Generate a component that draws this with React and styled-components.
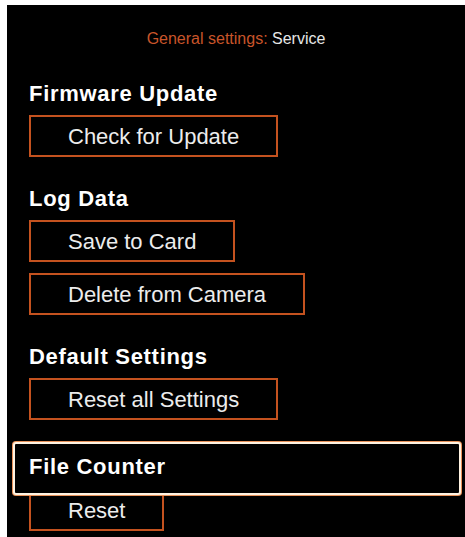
import React from "react";
import styled, { createGlobalStyle } from "styled-components";

const Global = createGlobalStyle`
  html, body { margin: 0; padding: 0; background: #ffffff; }
  body { font-family: "Liberation Sans", Arial, sans-serif; }
`;

const Page = styled.div`
  margin: 5px 0 0 7px;
  min-height: 532px;
  background: #000;
  color: #f2f2f2;
  font-family: "Liberation Sans", Arial, sans-serif;
  display: flex;
  flex-direction: column;
  overflow: hidden;
`;

const Header = styled.div`
  padding-top: 24px;
  font-size: 16px;
  line-height: 20px;
  text-align: center;
  color: #e6e6e6;
`;

const Crumb = styled.span`
  color: #c9552a;
`;

const Section = styled.section`
  display: flex;
  flex-direction: column;
  align-items: flex-start;
  padding-left: 22px;
  margin-top: ${(p) => p.$top}px;
`;

const Title = styled.h2`
  margin: 0;
  font-size: 22px;
  line-height: 26px;
  font-weight: 700;
  letter-spacing: 0.7px;
  color: #ffffff;
`;

const HighlightRow = styled.div`
  position: relative;
  z-index: 1;
  align-self: stretch;
  margin: 0 4px 0 -16px;
  padding: 10px 0 13px 14px;
  border: 2px solid #fff3e2;
  border-radius: 3px;
  box-shadow: 0 0 0 1px #e8925a;
  background: #000;
`;

const Buttons = styled.div`
  display: flex;
  flex-direction: column;
  align-items: flex-start;
  gap: 11px;
  margin-top: ${(p) => p.$top}px;
`;

const Button = styled.button`
  box-sizing: border-box;
  height: 42px;
  padding: 2px 37px 0;
  border: 2px solid #c4521f;
  background: #000;
  color: #ececec;
  font-family: "Liberation Sans", Arial, sans-serif;
  font-size: 22px;
  line-height: 36px;
  font-weight: 400;
  white-space: nowrap;
  cursor: pointer;
`;

export default function App() {
  return (
    <>
      <Global />
      <Page>
        <Header>
          <Crumb>General settings:</Crumb> Service
        </Header>

        <Section $top={32}>
          <Title>Firmware Update</Title>
          <Buttons $top={8}>
            <Button>Check for Update</Button>
          </Buttons>
        </Section>

        <Section $top={29}>
          <Title>Log Data</Title>
          <Buttons $top={8}>
            <Button>Save to Card</Button>
            <Button>Delete from Camera</Button>
          </Buttons>
        </Section>

        <Section $top={29}>
          <Title>Default Settings</Title>
          <Buttons $top={8}>
            <Button>Reset all Settings</Button>
          </Buttons>
        </Section>

        <Section $top={22}>
          <HighlightRow>
            <Title>File Counter</Title>
          </HighlightRow>
          <Buttons $top={-6}>
            <Button>Reset</Button>
          </Buttons>
        </Section>
      </Page>
    </>
  );
}
